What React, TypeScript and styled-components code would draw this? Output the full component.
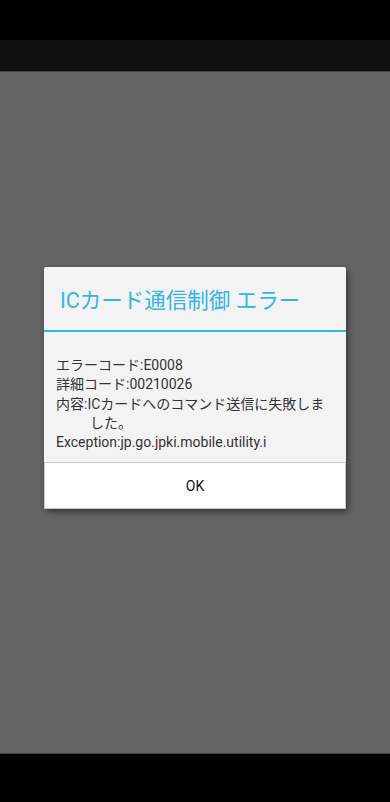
import React from 'react';
import styled, { createGlobalStyle } from 'styled-components';

const Global = createGlobalStyle`
  html, body {
    margin: 0;
    padding: 0;
    background: #000;
  }
  body {
    font-family: Roboto, "Noto Sans CJK JP", sans-serif;
  }
`;

const Screen = styled.div`
  width: 390px;
  height: 802px;
  display: flex;
  flex-direction: column;
  background: #000;
  overflow: hidden;
`;

const StatusBar = styled.div`
  height: 40px;
  flex-shrink: 0;
  background: #000;
`;

const ActionBar = styled.div`
  height: 30px;
  flex-shrink: 0;
  background: #101010;
  border-bottom: 1px solid #0a0a0a;
`;

const Overlay = styled.div`
  flex: 1;
  background: #646464;
  border-top: 1px solid #464646;
  border-bottom: 1px solid #404040;
  padding-top: 195px;
  display: flex;
  flex-direction: column;
  align-items: center;
`;

const NavBar = styled.div`
  height: 48px;
  flex-shrink: 0;
  background: #000;
`;

const Dialog = styled.div`
  width: 302px;
  background: #f3f3f3;
  border-radius: 2px;
  box-shadow: 2px 3px 6px rgba(0, 0, 0, 0.45);
  overflow: hidden;
`;

const Title = styled.div`
  height: 63px;
  display: flex;
  align-items: center;
  padding: 0 16px;
  font-size: 21.5px;
  color: #33b5e5;
  border-bottom: 2px solid #33b5e5;
`;

const Body = styled.div`
  padding: 24px 12px 10px 12px;
  font-size: 14px;
  line-height: 19.3px;
  color: #333;
`;

const Line = styled.div<{ hang?: number }>`
  padding-left: ${p => p.hang || 0}px;
  text-indent: -${p => p.hang || 0}px;
  white-space: nowrap;
  overflow: hidden;
`;

const Wrapped = styled(Line)`
  white-space: normal;
`;

const Button = styled.button`
  display: block;
  width: 100%;
  height: 47px;
  margin: 0;
  background: #fff;
  border: 1px solid #c8c8c8;
  border-top: 1px solid #cccccc;
  font-family: Roboto, "Noto Sans CJK JP", sans-serif;
  font-size: 14px;
  color: #111;
  padding: 0;
`;

export default function App() {
  return (
    <Screen>
      <Global />
      <StatusBar />
      <ActionBar />
      <Overlay>
        <Dialog>
          <Title>ICカード通信制御 エラー</Title>
          <Body>
            <Line>エラーコード:E0008</Line>
            <Line>詳細コード:00210026</Line>
            <Wrapped hang={34}>内容:ICカードへのコマンド送信に失敗しました。</Wrapped>
            <Line>Exception:jp.go.jpki.mobile.utility.i</Line>
          </Body>
          <Button>OK</Button>
        </Dialog>
      </Overlay>
      <NavBar />
    </Screen>
  );
}
